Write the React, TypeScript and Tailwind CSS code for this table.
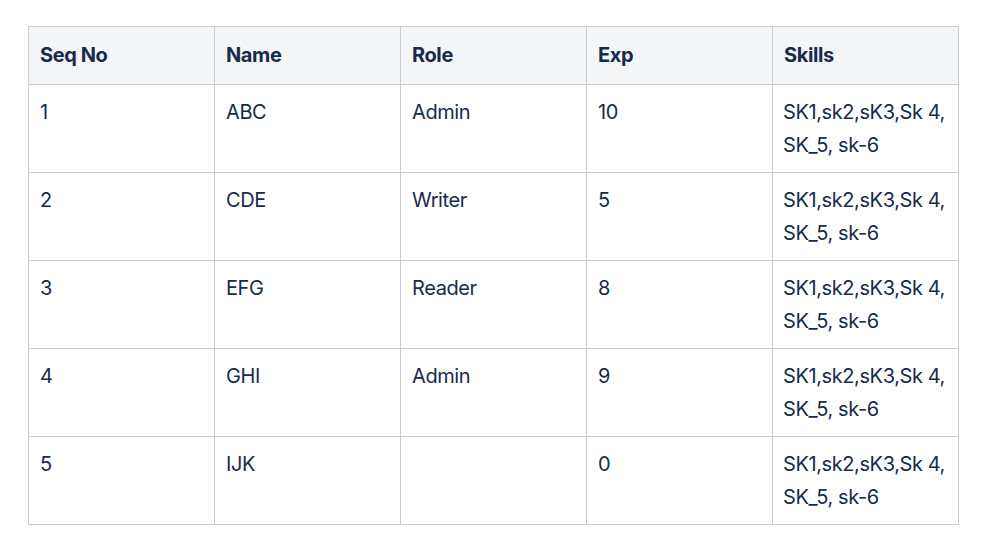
const rows = [
  { seq: "1", name: "ABC", role: "Admin", exp: "10" },
  { seq: "2", name: "CDE", role: "Writer", exp: "5" },
  { seq: "3", name: "EFG", role: "Reader", exp: "8" },
  { seq: "4", name: "GHI", role: "Admin", exp: "9" },
  { seq: "5", name: "IJK", role: "", exp: "0" },
];

const headers = ["Seq No", "Name", "Role", "Exp", "Skills"];

export default function App() {
  return (
    <div className="min-h-screen bg-white pt-[26px] pl-[28px] font-['Inter',sans-serif] text-[#172b4d]">
      <table className="table-fixed w-[931px] border-collapse text-[20px] leading-[33px] tracking-[-0.4px]">
        <thead>
          <tr className="bg-[#f4f5f7]">
            {headers.map((h) => (
              <th
                key={h}
                className="border border-[#c8ccd4] text-left font-bold px-[11px] pt-[12px] pb-[12px] align-top"
              >
                {h}
              </th>
            ))}
          </tr>
        </thead>
        <tbody>
          {rows.map((r) => (
            <tr key={r.seq}>
              <td className="border border-[#c8ccd4] px-[11px] pt-[11px] pb-[10px] align-top">{r.seq}</td>
              <td className="border border-[#c8ccd4] px-[11px] pt-[11px] pb-[10px] align-top">{r.name}</td>
              <td className="border border-[#c8ccd4] px-[11px] pt-[11px] pb-[10px] align-top">{r.role}</td>
              <td className="border border-[#c8ccd4] px-[11px] pt-[11px] pb-[10px] align-top">{r.exp}</td>
              <td className="border border-[#c8ccd4] px-[10px] pt-[11px] pb-[10px] align-top whitespace-nowrap">
                SK1,sk2,sK3,Sk 4,
                <br />
                SK_5, sk-6
              </td>
            </tr>
          ))}
        </tbody>
      </table>
    </div>
  );
}
